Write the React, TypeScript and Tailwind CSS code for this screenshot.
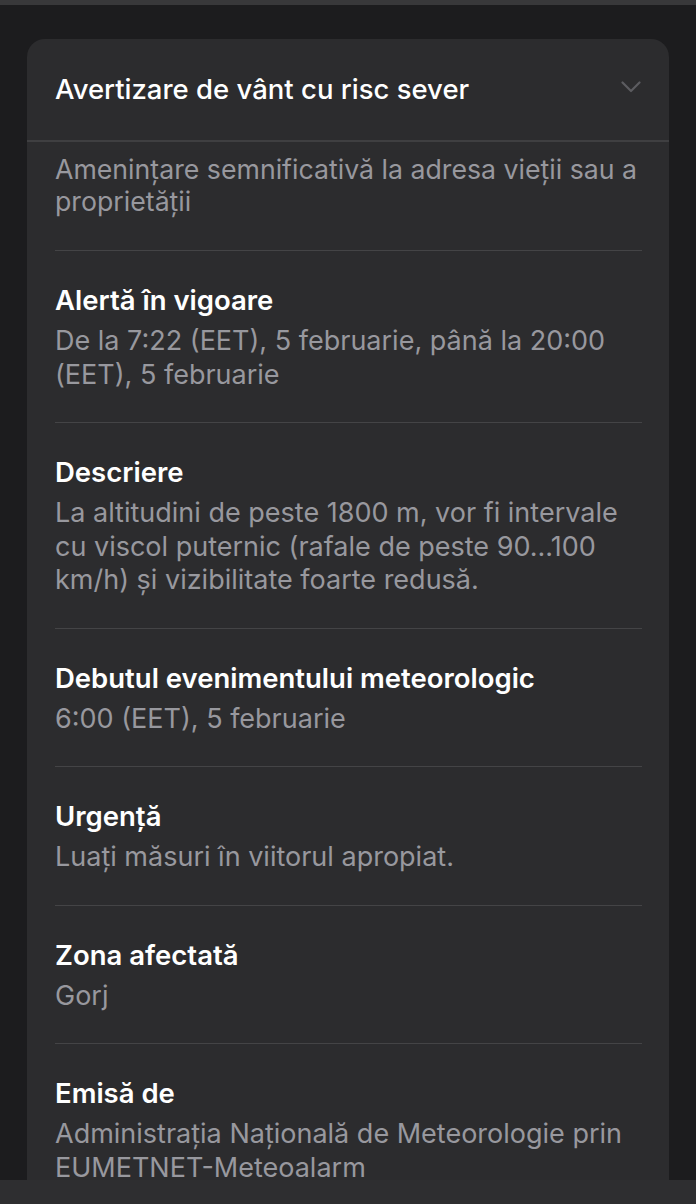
type Detail = {
  title: string;
  body: string;
};

const details: Detail[] = [
  {
    title: "Alertă în vigoare",
    body: "De la 7:22 (EET), 5 februarie, până la 20:00 (EET), 5 februarie",
  },
  {
    title: "Descriere",
    body: "La altitudini de peste 1800 m, vor fi intervale cu viscol puternic (rafale de peste 90...100 km/h) și vizibilitate foarte redusă.",
  },
  {
    title: "Debutul evenimentului meteorologic",
    body: "6:00 (EET), 5 februarie",
  },
  {
    title: "Urgență",
    body: "Luați măsuri în viitorul apropiat.",
  },
  {
    title: "Zona afectată",
    body: "Gorj",
  },
  {
    title: "Emisă de",
    body: "Administrația Națională de Meteorologie prin EUMETNET-Meteoalarm",
  },
];

const DetailRow = ({ title, body }: Detail) => {
  return (
    <div className="border-t border-[#444446] py-[31px]">
      <h3 className="text-[27.5px] font-semibold leading-[36px] text-white">{title}</h3>
      <p className="mt-[6px] text-[27px] leading-[33.5px] text-[#98989e]">{body}</p>
    </div>
  );
};

export default function App() {
  return (
    <div
      className="flex h-[1204px] w-[696px] flex-col overflow-hidden bg-[#1c1c1e]"
      style={{ fontFamily: "Inter, 'Noto Sans', sans-serif" }}
    >
      <div className="h-[5px] shrink-0 bg-[#38383a]" />
      <div className="min-h-0 flex-1 overflow-hidden px-[27px] pt-[34px]">
        <div className="rounded-[18px] bg-[#2c2c2e]">
          <div className="flex h-[101px] items-center justify-between pl-[28px] pr-[28px]">
            <h2 className="text-[27.5px] font-medium text-white">
              Avertizare de vânt cu risc sever
            </h2>
            <svg width="20" height="12" viewBox="0 0 20 12" fill="none" className="-mt-[6px]">
              <polyline
                points="1.5,1.5 10,10 18.5,1.5"
                stroke="#5c5c60"
                strokeWidth="2.2"
                strokeLinecap="round"
                strokeLinejoin="round"
              />
            </svg>
          </div>
          <div className="border-t-2 border-[#3f3f41]">
            <div className="pl-[28px] pr-[27px]">
              <p className="pb-[33px] pt-[11px] text-[26.7px] leading-[32px] text-[#98989e]">
                Amenințare semnificativă la adresa vieții sau a proprietății
              </p>
              {details.map((d, i) => (
                <DetailRow key={i} {...d} />
              ))}
            </div>
          </div>
        </div>
      </div>
      <div className="h-[24px] shrink-0 bg-[#2e2e30]" />
    </div>
  );
}
